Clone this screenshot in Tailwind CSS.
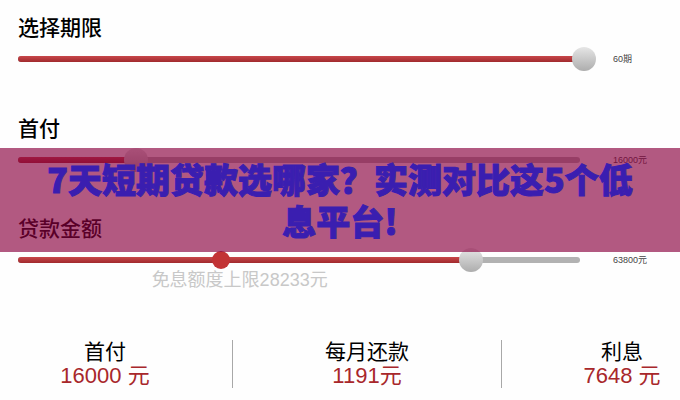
<!DOCTYPE html>
<html lang="zh-CN">
<head>
    <meta charset="UTF-8">
    <meta name="viewport" content="width=device-width, initial-scale=1.0">
    <title>7天短期贷款选哪家？</title>
    <script src="https://cdn.jsdelivr.net/npm/@tailwindcss/browser@4"></script>
</head>
<body class="relative min-h-screen bg-[#fefefe] text-black font-['Liberation_Sans','Noto_Sans_CJK_SC',sans-serif]">
    <main class="pt-3">
        <form class="pl-[18px]">
            <!-- Term -->
            <div class="h-[101px]">
                <label for="term" class="block text-[21px] leading-8 font-medium">选择期限</label>
                <div class="flex items-center mt-[3px]">
                    <div class="grid grow items-center">
                        <div class="col-start-1 row-start-1 mr-4 h-[6px] rounded-full bg-[#b2b2b2]">
                            <div class="h-full rounded-full bg-linear-to-b from-[#c8474a] to-[#a12a2e]" style="width: 100%"></div>
                        </div>
                        <input type="range" id="term" min="0" max="60" value="60" class="col-start-1 row-start-1 w-full h-6 appearance-none bg-transparent [&::-webkit-slider-thumb]:appearance-none [&::-webkit-slider-thumb]:size-6 [&::-webkit-slider-thumb]:rounded-full [&::-webkit-slider-thumb]:bg-linear-to-b [&::-webkit-slider-thumb]:from-[#e6e6e6] [&::-webkit-slider-thumb]:to-[#adadad]">
                    </div>
                    <output for="term" class="ml-[17px] w-[67px] text-[9px] leading-3 text-[#444]">60期</output>
                </div>
            </div>

            <!-- Down payment -->
            <div class="h-[100px]">
                <label for="down" class="block text-[21px] leading-8 font-medium">首付</label>
                <div class="flex items-center mt-[3px]">
                    <div class="grid grow items-center">
                        <div class="col-start-1 row-start-1 mr-4 h-[6px] rounded-full bg-[#b2b2b2]">
                            <div class="h-full rounded-full bg-linear-to-b from-[#c8474a] to-[#a12a2e]" style="width: 21%"></div>
                        </div>
                        <input type="range" id="down" min="0" max="83600" value="16000" class="col-start-1 row-start-1 w-full h-6 appearance-none bg-transparent [&::-webkit-slider-thumb]:appearance-none [&::-webkit-slider-thumb]:size-6 [&::-webkit-slider-thumb]:rounded-full [&::-webkit-slider-thumb]:bg-linear-to-b [&::-webkit-slider-thumb]:from-[#e6e6e6] [&::-webkit-slider-thumb]:to-[#adadad]">
                    </div>
                    <output for="down" class="ml-[17px] w-[67px] text-[9px] leading-3 text-[#444]">16000元</output>
                </div>
            </div>

            <!-- Loan amount, with the interest-free limit marked on the track -->
            <div>
                <label for="amount" class="block text-[21px] leading-8 font-medium">贷款金额</label>
                <div class="flex items-center mt-[3px]">
                    <div class="grid grow items-center">
                        <div class="col-start-1 row-start-1 mr-4 h-[6px] rounded-full bg-[#b2b2b2]">
                            <div class="h-full rounded-full bg-linear-to-b from-[#c8474a] to-[#a12a2e]" style="width: 80.6%"></div>
                        </div>
                        <span class="col-start-1 row-start-1 size-[18px] rounded-full bg-[#c23335]" style="margin-left: 33.5%"></span>
                        <input type="range" id="amount" min="0" max="80150" value="63800" class="col-start-1 row-start-1 w-full h-6 appearance-none bg-transparent [&::-webkit-slider-thumb]:appearance-none [&::-webkit-slider-thumb]:size-6 [&::-webkit-slider-thumb]:rounded-full [&::-webkit-slider-thumb]:bg-linear-to-b [&::-webkit-slider-thumb]:from-[#e6e6e6] [&::-webkit-slider-thumb]:to-[#adadad]">
                    </div>
                    <output for="amount" class="ml-[17px] w-[67px] text-[9px] leading-3 text-[#444]">63800元</output>
                </div>
                <p class="w-2/3 pl-[2px] text-center text-[18px] leading-4 text-[#c8c8c8]">免息额度上限28233元</p>
            </div>
        </form>

        <!-- Summary -->
        <dl class="mt-[52px] grid grid-cols-[233fr_269fr_178fr] text-center leading-6">
            <div class="h-12 border-r border-[#a8a8a8] pr-[22px]">
                <dt class="text-[21px]">首付</dt>
                <dd class="text-[22px] text-[#a8272b]">16000 元</dd>
            </div>
            <div class="h-12 border-r border-[#a8a8a8]">
                <dt class="text-[21px]">每月还款</dt>
                <dd class="text-[22px] text-[#a8272b]">1191元</dd>
            </div>
            <div class="h-12 pl-[62px]">
                <dt class="text-[21px]">利息</dt>
                <dd class="text-[22px] text-[#a8272b]">7648 元</dd>
            </div>
        </dl>
    </main>

    <!-- Title banner -->
    <div class="absolute inset-x-0 top-[148px] bg-[#89003d]/65 px-10 py-[10px]">
        <h1 class="text-center text-[34px] leading-[42px] font-black text-[#3a1eb0] [-webkit-text-stroke:1px_#3a1eb0] font-['Noto_Sans_CJK_SC',sans-serif]">7天短期贷款选哪家？实测对比这5个低息平台!</h1>
    </div>
</body>
</html>
